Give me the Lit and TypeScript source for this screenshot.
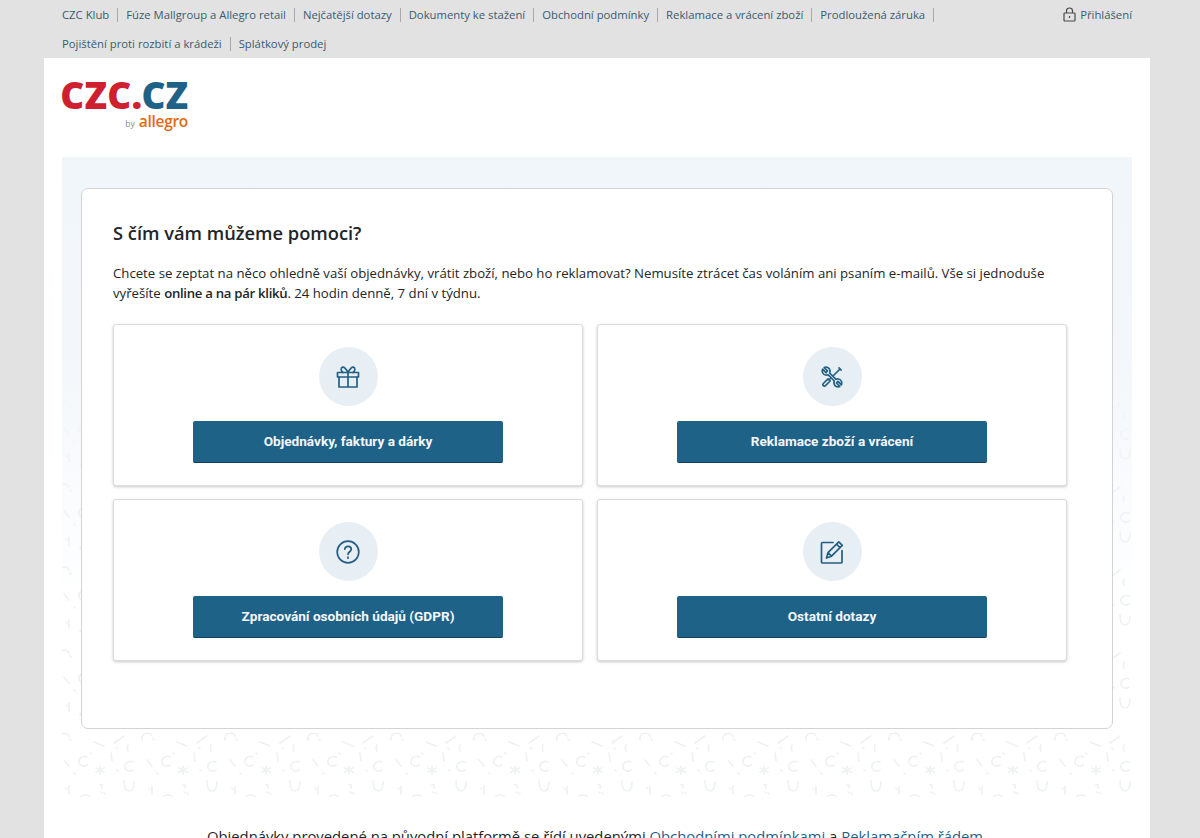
import { LitElement, html, css, svg } from 'lit';
import { customElement } from 'lit/decorators.js';

const NAV_LINKS = [
  'CZC Klub',
  'Fúze Mallgroup a Allegro retail',
  'Nejčatější dotazy',
  'Dokumenty ke stažení',
  'Obchodní podmínky',
  'Reklamace a vrácení zboží',
  'Prodloužená záruka',
  'Pojištění proti rozbití a krádeži',
  'Splátkový prodej',
];

const ICONS = {
  gift: svg`
    <rect x="1.500" y="7.500" width="21" height="4.500" />
    <path d="M3 12v10h18V12M12 7.500V22M12 7.500C10 3.800 8.300 2 6.700 2.200 4.700 2.500 4.500 6 7 7.500M12 7.500c2-3.700 3.700-5.500 5.300-5.300 2 .3 2.200 3.800-.3 5.300" />`,
  tools: svg`
    <path d="M2.600 4.200 6 7.600 7.600 6 4.200 2.600C6.500 1.600 9.500 2.600 10 5.500c.2 1.100 0 1.900-.3 2.500l6.300 6.300c.6-.3 1.400-.5 2.500-.3 2.900.5 3.900 3.500 2.900 5.800L18 16.400 16.400 18l3.400 3.400c-2.300 1-5.300 0-5.800-2.900-.2-1.100 0-1.900.3-2.500L8 9.700c-.6.3-1.400.5-2.500.3C2.600 9.500 1.600 6.500 2.600 4.200Z" />
    <path d="m19 2.800 2.200 2.200M20 4l-6.500 6.500M10.500 13.500 9 15M8 13.800l2.200 2.200-4.700 4.700c-.7.7-1.600.6-2.200 0s-.7-1.500 0-2.200Z" />`,
  help: svg`
    <circle cx="12" cy="12" r="10.800" />
    <path d="M8.800 9.200C9 7.300 10.400 6.400 12 6.400c1.900 0 3.300 1.200 3.300 2.900 0 2.400-3.300 2.500-3.300 5" />
    <path d="M12 17v1.200" />`,
  edit: svg`
    <path d="M13 2.500H2.500c-.6 0-1 .4-1 1V22c0 .6.4 1 1 1H21c.6 0 1-.4 1-1V10.500" />
    <path d="m6.500 18 1.500-5.300L18.800 1.900l3.500 3.500L11.500 16.200 6.500 18ZM16.500 4.200 20 7.700M8 12.700l3.500 3.500" />`,
};

const TILES: [keyof typeof ICONS, string][] = [
  ['gift', 'Objednávky, faktury a dárky'],
  ['tools', 'Reklamace zboží a vrácení'],
  ['help', 'Zpracování osobních údajů (GDPR)'],
  ['edit', 'Ostatní dotazy'],
];

@customElement('app-root')
export class AppRoot extends LitElement {
  static override styles = css`
    :host {
      display: block;
      height: 838px;
      overflow: hidden;
      background: #e2e2e2;
      font-family: 'Open Sans', 'Noto Sans', sans-serif;
      color: #212529;
    }

    a {
      color: inherit;
      text-decoration: none;
    }

    .top {
      display: flex;
      align-items: flex-start;
      padding: 0 68px 0 62px;
      font-size: 11.3px;
      color: #3b5a6e;
    }

    .nav {
      flex: 1;
      display: flex;
      flex-wrap: wrap;
      list-style: none;
      margin: 0;
      padding: 0;
    }

    .nav li {
      height: 29px;
      display: flex;
      align-items: center;
    }

    .nav a {
      line-height: 14px;
      padding-right: 8px;
      margin-right: 8px;
      border-right: 1px solid #a9a9a9;
    }

    .nav li:last-child a {
      border-right: 0;
    }

    .login {
      height: 29px;
      display: flex;
      align-items: center;
      gap: 4px;
    }

    .login svg {
      width: 13px;
      height: 15px;
      fill: none;
      stroke: #4a4a4a;
      stroke-width: 1.2;
    }

    .main {
      margin: 0 50px 0 44px;
      padding: 0 18px;
      height: 780px;
      background: #fff;
    }

    .logo-row {
      height: 99px;
      box-sizing: border-box;
      padding-top: 15px;
    }

    .logo {
      width: 126px;
      display: flex;
      flex-direction: column;
      align-items: flex-end;
    }

    .logo-mark {
      font-size: 37px;
      font-weight: 800;
      line-height: 44px;
      color: #1f6288;
      white-space: nowrap;
    }

    .logo-mark span {
      color: #cf2030;
      letter-spacing: 0.2px;
      margin-right: -1px;
    }

    .logo-by {
      margin-top: -4px;
      font-size: 15.5px;
      font-weight: 600;
      line-height: 17px;
      letter-spacing: -0.3px;
      color: #e56a16;
    }

    .logo-by small {
      font-size: 8.5px;
      font-weight: 400;
      letter-spacing: 0;
      color: #8a8a8a;
      margin-right: 4px;
    }

    .panel {
      height: 640px;
      box-sizing: border-box;
      padding: 31px 19px 0;
      background-color: #fff;
      background-image:
        linear-gradient(#f1f6fa 0, #f3f7fb 200px, rgba(255, 255, 255, 0) 450px),
        url("data:image/svg+xml,%3Csvg xmlns='http://www.w3.org/2000/svg' width='83' height='83' fill='none' stroke='%23eff1f3' stroke-width='1.7' stroke-linecap='round'%3E%3Cpath d='M17 14l10 4M37 15l10-7M51 17c-1 2-1 4 0 6M39 20l1 1M65 12C64 5 73 3 75 8M76 11l1 1M10 29c-5-2-9 2-8 6 1 3 5 4 8 2M13 25l1 1M34 25l1 8M56 34c-5-2-9 2-8 6 1 3 5 4 8 2M70 32l5 6M23 38v8M19 40l8 4M27 40l-8 4M40 42l1 1M80 45l1 1M23 57c2-1 3 1 2 3M24 64l1 1M47 53c0 7 2 10 5 10s5-3 5-9M72 60l1 1M75 58v8M3 70c1-4 9-4 10 0M27 65l1 1'/%3E%3C/svg%3E");
      background-position: 0 0, 15px 73px;
    }

    .card {
      height: 541px;
      box-sizing: border-box;
      padding: 30px 45px 0 31px;
      background: #fff;
      border: 1px solid #d3d3d3;
      border-radius: 7px;
    }

    h1 {
      margin: 0;
      font-size: 18.300px;
      font-weight: 600;
      line-height: 27px;
      color: #212529;
    }

    .intro {
      margin: 17px 0 21px;
      font-size: 13.2px;
      line-height: 20px;
    }

    .intro b {
      font-weight: 600;
      letter-spacing: -0.3px;
    }

    .grid {
      display: grid;
      grid-template-columns: 470px 470px;
      grid-auto-rows: 162px;
      column-gap: 14px;
      row-gap: 13px;
    }

    .tile {
      display: flex;
      flex-direction: column;
      align-items: center;
      box-sizing: border-box;
      padding-top: 22px;
      background: #fff;
      border: 1px solid #dcdcdc;
      border-radius: 3px;
      box-shadow: 0 1px 3px rgba(0, 0, 0, 0.22);
    }

    .circle {
      width: 59px;
      height: 59px;
      display: flex;
      align-items: center;
      justify-content: center;
      border-radius: 50%;
      background: #e8eff4;
    }

    .circle svg {
      width: 24px;
      height: 24px;
      fill: none;
      stroke: #235f82;
      stroke-width: 1.7;
      stroke-linejoin: round;
      stroke-linecap: round;
    }

    .btn {
      width: 310px;
      height: 42px;
      margin-top: 15px;
      padding-bottom: 1px;
      display: flex;
      align-items: center;
      justify-content: center;
      box-sizing: border-box;
      font-family: Roboto, 'Liberation Sans', sans-serif;
      font-size: 13.6px;
      font-weight: 700;
      color: #f4f7f9;
      background: #1f6288;
      border-bottom: 1px solid #123f5c;
      border-radius: 2px;
    }

    .note {
      margin: 28px 0 0;
      padding-right: 4px;
      font-size: 14.8px;
      line-height: 22px;
      text-align: center;
      white-space: nowrap;
    }

    .note a {
      color: #1f6288;
    }
  `;

  override render() {
    return html`
      <header class="top">
        <ul class="nav">
          ${NAV_LINKS.map((l) => html`<li><a href="#">${l}</a></li>`)}
        </ul>
        <a class="login" href="#">
          <svg viewBox="0 0 13 15">
            <rect x="1" y="6" width="11" height="8" rx="0.8" />
            <path d="M3.500 6V3.800C3.500 2 4.800 1 6.500 1s3 1 3 2.800V6M6.500 9v2" />
          </svg>
          Přihlášení
        </a>
      </header>
      <main class="main">
        <div class="logo-row">
          <a class="logo" href="#">
            <div class="logo-mark"><span>CZC.</span>CZ</div>
            <div class="logo-by"><small>by</small>allegro</div>
          </a>
        </div>
        <section class="panel">
          <div class="card">
            <h1>S čím vám můžeme pomoci?</h1>
            <p class="intro">
              Chcete se zeptat na něco ohledně vaší objednávky, vrátit zboží, nebo ho reklamovat?
              Nemusíte ztrácet čas voláním ani psaním e-mailů. Vše si jednoduše vyřešíte
              <b>online a na pár kliků</b>. 24 hodin denně, 7 dní v týdnu.
            </p>
            <div class="grid">
              ${TILES.map(
                ([icon, label]) => html`
                  <div class="tile">
                    <div class="circle"><svg viewBox="0 0 24 24">${ICONS[icon]}</svg></div>
                    <a class="btn" href="#">${label}</a>
                  </div>
                `
              )}
            </div>
          </div>
        </section>
        <p class="note">
          Objednávky provedené na původní platformě se řídí uvedenými
          <a href="#">Obchodními podmínkami</a> a <a href="#">Reklamačním řádem</a>
        </p>
      </main>
    `;
  }
}
